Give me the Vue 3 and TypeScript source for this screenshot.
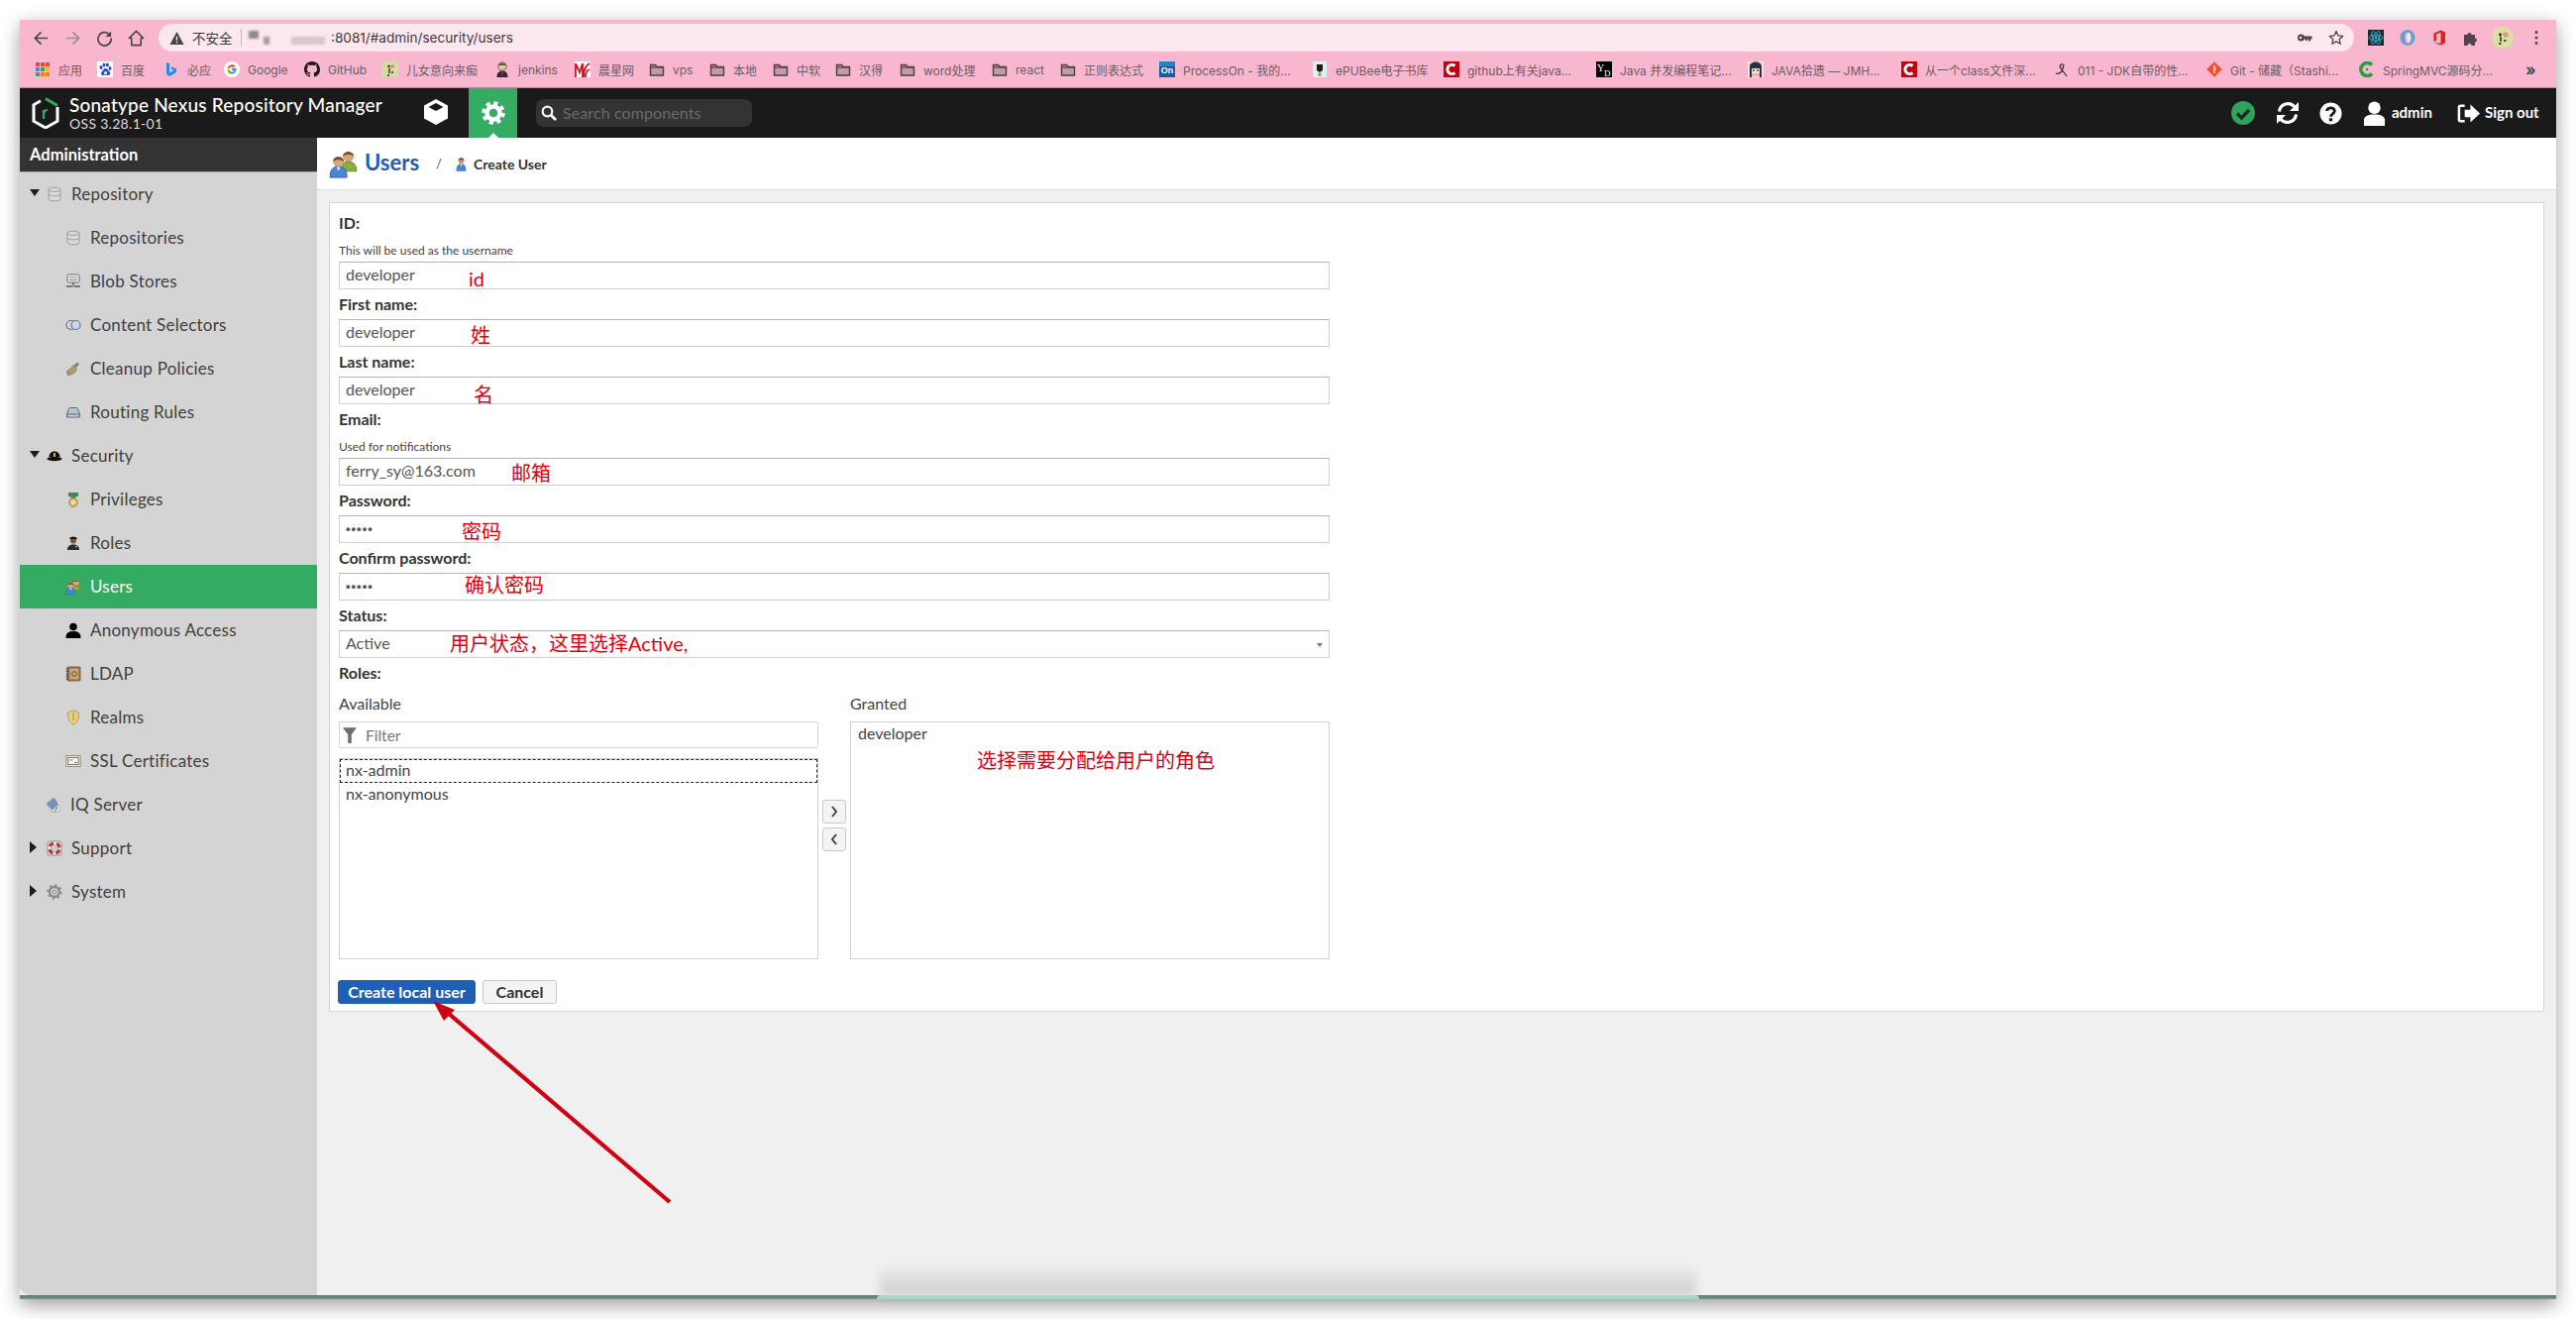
<script setup lang="ts">
const folder = '<path d="M1.500 3.500h5l1.500 2h6.500v8.500h-13z" fill="#c39aa8" stroke="#4c3f46" stroke-width="1.400"/><path d="M1.500 6h13" stroke="#4c3f46" stroke-width="1.200"/>'
const cred = '<rect width="16" height="16" fill="#c00010"/><path d="M11.500 4.500A4.600 4.600 0 1 0 11.500 11.500" fill="none" stroke="#fff" stroke-width="3"/>'
const icons: Record<string, string> = {
  apps: [0, 1, 2].flatMap((r) => [0, 1, 2].map((c) => `<rect x="${1 + c * 5}" y="${1 + r * 5}" width="4" height="4" fill="${['#e8453c', '#e8453c', '#e8453c', '#4285f4', '#34a853', '#fbbc05', '#34a853', '#ea8600', '#ea8600'][r * 3 + c]}"/>`)).join(''),
  baidu: '<rect width="16" height="16" fill="#fff"/><g fill="#2b4fd8"><ellipse cx="4" cy="6" rx="1.600" ry="2.100"/><ellipse cx="7" cy="3.400" rx="1.500" ry="2"/><ellipse cx="10.400" cy="3.600" rx="1.500" ry="2"/><ellipse cx="13" cy="7" rx="1.500" ry="2"/><path d="M8.500 7c2 0 2.500 2 4 3.200 1.500 1.500.4 4-1.800 3.800-1.400-.2-2.600-.4-4 0-2.400.4-3.400-2.200-1.800-3.800C6.200 9 6.500 7 8.500 7z"/></g><circle cx="8.500" cy="11.500" r="1.500" fill="#fff"/>',
  bing: '<path d="M3 1l3 1v9.500l4.500-2.500-2-1-1.200-3L13 7.500v3.500L6 15l-3-2z" fill="#1f8fe6"/>',
  google: '<circle cx="8" cy="8" r="8" fill="#fff"/><path d="M8 3.300a4.700 4.700 0 0 0-4.200 2.600L5.500 7.200A2.900 2.900 0 0 1 10 6.100l1.400-1.400A4.700 4.700 0 0 0 8 3.300z" fill="#ea4335"/><path d="M3.800 5.900a4.700 4.700 0 0 0 0 4.200l1.700-1.300a2.900 2.900 0 0 1 0-1.600z" fill="#fbbc05"/><path d="M3.800 10.100A4.700 4.700 0 0 0 11 11.600L9.400 10.300A2.900 2.900 0 0 1 5.500 8.800z" fill="#34a853"/><path d="M12.600 7.100H8v1.900h2.700a2.300 2.300 0 0 1-1.300 1.300L11 11.600a4.700 4.700 0 0 0 1.600-4.500z" fill="#4285f4"/>',
  github: '<path fill="#1a1a1a" d="M8 0C3.580 0 0 3.580 0 8c0 3.540 2.290 6.530 5.470 7.590.4.070.55-.17.55-.38 0-.19-.01-.82-.01-1.490-2.010.37-2.530-.49-2.690-.94-.09-.23-.48-.94-.82-1.130-.28-.15-.68-.52-.01-.53.63-.01 1.080.58 1.230.82.720 1.210 1.870.87 2.330.66.070-.52.28-.87.51-1.070-1.780-.2-3.640-.89-3.640-3.950 0-.87.31-1.590.82-2.150-.08-.2-.36-1.020.08-2.120 0 0 .67-.21 2.200.82.64-.18 1.320-.27 2-.27.68 0 1.360.09 2 .27 1.530-1.040 2.200-.82 2.200-.82.44 1.100.16 1.920.08 2.120.51.56.82 1.270.82 2.150 0 3.070-1.870 3.750-3.650 3.950.29.25.54.73.54 1.480 0 1.070-.01 1.930-.01 2.200 0 .21.15.46.55.38A8.013 8.013 0 0016 8c0-4.420-3.580-8-8-8z"/>',
  photo: '<rect width="16" height="16" fill="#d6dc9f"/><circle cx="10" cy="5" r="2" fill="#d89a70"/><circle cx="6.500" cy="5" r="1.200" fill="#222"/><path d="M7 7v5M5 14h2M9 11h2" stroke="#222" stroke-width="1.300"/>',
  jenkins: '<circle cx="8" cy="5" r="4.200" fill="#e8c4a0" stroke="#444" stroke-width=".7"/><path d="M4 4c.5-3 7-3.500 8 0z" fill="#555"/><path d="M2.500 16c0-5 2.500-6.500 5.500-6.500s5.500 1.500 5.500 6.500z" fill="#2a2a3a"/><path d="M7 9.500h2l-.5 5h-1z" fill="#c02030"/>',
  star: '<rect width="16" height="16" fill="#fff"/><path d="M1 16V2l4 9 3-9v14M9 16c0-8 2-12 6-14M15 8c-3 1-4 4-4 8" fill="none" stroke="#d8101a" stroke-width="1.800"/>',
  folder,
  on: '<rect width="16" height="16" fill="#1a5a9e"/><rect width="16" height="5" fill="#2a80c0"/><text x="8" y="12" font-size="9" font-weight="700" text-anchor="middle" fill="#fff" font-family="Liberation Sans">On</text>',
  epub: '<rect x="1" width="14" height="16" fill="#dff0f5"/><path d="M5 3h6v6l-3 2-3-2z" fill="#201a10"/><path d="M8 10l-2 4 2 1 2-1z" fill="#7ab030"/>',
  cred,
  yd: '<rect width="16" height="16" fill="#000"/><text x="1" y="10" font-size="10" font-family="Liberation Serif" fill="#fff">Y</text><text x="8" y="15" font-size="9" font-family="Liberation Serif" fill="#fff">D</text>',
  anime: '<rect width="16" height="16" fill="#ece4d8"/><path d="M2 16V5c0-6 12-6 12 0v11h-2V7H4v9z" fill="#2c2c44"/><circle cx="6" cy="9" r="1" fill="#345"/><circle cx="10" cy="9" r="1" fill="#345"/><rect x="4" y="12" width="8" height="3" fill="#f0b0a0"/>',
  sig: '<path d="M2 12c2 1 4 0 6-2l2-6c-2-3-5 0-3 3l6 8" fill="none" stroke="#2a2a2a" stroke-width="1.200"/>',
  git: '<rect x="2.500" y="2.500" width="11" height="11" transform="rotate(45 8 8)" fill="#f05030"/><path d="M8 4v8M8 8l2-1" stroke="#fff" stroke-width="1.200"/>',
  cgreen: '<path d="M13 3.500A6.500 6.500 0 1 0 13 12.500" fill="none" stroke="#2c9a45" stroke-width="3.600"/><circle cx="8" cy="8" r="1.300" fill="#2c9a45"/>',
  db: '<g fill="#dadada" stroke="#8e8e8e" stroke-width=".8"><path d="M2 3.500c0-3 12-3 12 0v9c0 3-12 3-12 0z" /><path d="M2 3.500c0 2.500 12 2.500 12 0M2 8c0 2.500 12 2.500 12 0" fill="none"/></g>',
  blob: '<rect x="2" y="1" width="12" height="8" rx="1.500" fill="#eee" stroke="#666"/><path d="M4 4h8M4 6.500h8" stroke="#888"/><path d="M8 9v3M1 13h14" stroke="#555" stroke-width="1.400"/><rect x="6.500" y="11.500" width="3" height="2.500" fill="#c8963c"/>',
  sel: '<circle cx="5.500" cy="8" r="4.500" fill="#d8d8d8" stroke="#777" stroke-width="1.200"/><circle cx="10.500" cy="8" r="4.500" fill="#c8d8ec" stroke="#5c7690" stroke-width="1.200"/>',
  broom: '<path d="M12 1.500l2 2-4 4-2-2z" fill="#8a7a58"/><path d="M8 4.500l3.500 3.500c-1 4-4 6.500-9.500 6.500l2-2-3 .5 2-3-1.500.5C4 9 6 7 8 4.500z" fill="#b09a70" stroke="#6e5e42" stroke-width=".5"/>',
  route: '<path d="M1.500 10l2-5.500c.2-.5.5-1 1.500-1h6c1 0 1.300.5 1.500 1l2 5.500v3h-13z" fill="#b7c4cc" stroke="#5d6a72"/><path d="M1.500 10h13" stroke="#5d6a72"/><path d="M4 11.700h8" stroke="#dfe6ea" stroke-dasharray="1 1"/>',
  cap: '<ellipse cx="8" cy="11" rx="7.600" ry="2.200" fill="#111"/><path d="M2.500 9c0-7.500 11-7.500 11 0z" fill="#111"/><rect x="7" y="5" width="2" height="4" fill="#d8b050"/>',
  medal: '<rect x="3" y="1" width="10" height="4" fill="#3f8a4e"/><rect x="5.500" y="5" width="5" height="2" fill="#777"/><circle cx="8" cy="11" r="4.200" fill="#e2c76c" stroke="#92783a"/><circle cx="8" cy="11" r="2" fill="#f2e2a6"/>',
  roles: '<path d="M2 15c0-4 2.500-5.500 6-5.500s6 1.500 6 5.500z" fill="#2c2c30"/><circle cx="8" cy="5.500" r="3.100" fill="#7d5838"/><path d="M4 4c.5-3.500 7.500-3.500 8 0z" fill="#141414"/><rect x="10" y="11" width="2" height="1.200" fill="#d8b050"/>',
  users: '<circle cx="10.800" cy="4" r="3" fill="#d9a878"/><path d="M7.800 3.800C7.800.4 13.800.4 13.800 3.800 12.500 2.500 9 2.500 7.800 3.800z" fill="#7a4a22"/><path d="M6.500 12c0-4 1.800-5.300 4.300-5.300S15.300 8 15.300 12z" fill="#88ad42" stroke="#5d7a28" stroke-width=".5"/><circle cx="5.300" cy="6.800" r="3" fill="#d9a878"/><path d="M2.300 6.600C2.300 3.200 8.300 3.200 8.300 6.600 7 5.300 3.500 5.300 2.300 6.600z" fill="#7a4a22"/><path d="M.6 15.500c0-5 2-6 4.700-6s4.700 1 4.700 6z" fill="#4a86d8" stroke="#2c5ea8" stroke-width=".5"/><path d="M4.300 9.600h2l-1 2.200z" fill="#fff"/>',
  user1: '<circle cx="8" cy="4.500" r="3" fill="#c99068"/><path d="M5 4c.2-3.500 5.800-3.500 6 0-1.500-1-4.500-1-6 0z" fill="#6a3e1c"/><path d="M3 15.500c0-5.500 2-7.500 5-7.500s5 2 5 7.500z" fill="#4a86d8" stroke="#2c5ea8" stroke-width=".5"/><path d="M6.800 8h2.400l-1.200 2.500z" fill="#fff"/>',
  anon: '<circle cx="8" cy="4.500" r="3.800" fill="#000"/><path d="M.5 15.500c0-5 3-6.500 7.500-6.500s7.500 1.500 7.500 6.500c0 .5-1 .5-1 .5H1.500s-1 0-1-.5z" fill="#000"/>',
  ldap: '<rect x="2" y="1" width="13" height="14" rx="1" fill="#a8845c" stroke="#5e4426" stroke-width=".8"/><rect x="5" y="3" width="8" height="10" fill="#caa87c"/><circle cx="9" cy="8" r="2.400" fill="none" stroke="#6e5030"/><path d="M.8 3h2.500M.8 5.500h2.500M.8 8h2.500M.8 10.500h2.500M.8 13h2.500" stroke="#333" stroke-width="1"/>',
  shield: '<path d="M8 .8l5.500 2.200c.3 5.500-1.300 9.700-5.500 12.200C3.800 12.700 2.200 8.500 2.500 3z" fill="#e7cf80" stroke="#a98e44" stroke-width=".8"/><path d="M8 3v8" stroke="#a98e44"/>',
  ssl: '<rect x=".8" y="2.500" width="14.400" height="11" fill="#efe7d6" stroke="#a08d6c"/><rect x="2.800" y="4.500" width="10.400" height="7" fill="#f8f6f0" stroke="#777"/><path d="M4.500 7h3M9 9.500h3" stroke="#5a78a8"/>',
  iq: '<path d="M1 6.500L6 2h4l1 3v10H6z" fill="#e7e7e7" stroke="#8a8a8a" stroke-width=".7"/><path d="M2 7l6-5 4 5-5 6z" fill="#6c94c6" stroke="#3e628e" stroke-width=".6"/><path d="M12 8l2 1v6H9z" fill="#eee" stroke="#999" stroke-width=".6"/><path d="M10 14l2-4" stroke="#79a53a" stroke-width="1.400"/>',
  buoy: '<rect x=".7" y=".7" width="14.600" height="14.600" rx="2" fill="#c8c8c8" stroke="#8a8a8a" stroke-width=".6"/><circle cx="8" cy="8" r="5" fill="none" stroke="#b8363a" stroke-width="3.200"/><circle cx="8" cy="8" r="5" fill="none" stroke="#f1eded" stroke-width="3.200" stroke-dasharray="3 4.850" stroke-dashoffset="1.500"/>',
  gear: '<circle cx="8" cy="8" r="5" fill="none" stroke="#8c8c8c" stroke-width="2.400"/><circle cx="8" cy="8" r="6.800" fill="none" stroke="#8c8c8c" stroke-width="2" stroke-dasharray="2 3.340"/><circle cx="8" cy="8" r="2" fill="none" stroke="#8c8c8c"/>',
}

const bookmarks = [
  { icon: 'apps', label: '应用', w: 63 },
  { icon: 'baidu', label: '百度', w: 67 },
  { icon: 'bing', label: '必应', w: 61 },
  { icon: 'google', label: 'Google', w: 81 },
  { icon: 'github', label: 'GitHub', w: 79 },
  { icon: 'photo', label: '儿女意向来痴', w: 113 },
  { icon: 'jenkins', label: 'jenkins', w: 81 },
  { icon: 'star', label: '晨星网', w: 75 },
  { icon: 'folder', label: 'vps', w: 61 },
  { icon: 'folder', label: '本地', w: 64 },
  { icon: 'folder', label: '中软', w: 63 },
  { icon: 'folder', label: '汉得', w: 65 },
  { icon: 'folder', label: 'word处理', w: 93 },
  { icon: 'folder', label: 'react', w: 69 },
  { icon: 'folder', label: '正则表达式', w: 100 },
  { icon: 'on', label: 'ProcessOn - 我的...', w: 154 },
  { icon: 'epub', label: 'ePUBee电子书库', w: 133 },
  { icon: 'cred', label: 'github上有关java...', w: 154 },
  { icon: 'yd', label: 'Java 并发编程笔记...', w: 153 },
  { icon: 'anime', label: 'JAVA拾遗 — JMH...', w: 155 },
  { icon: 'cred', label: '从一个class文件深...', w: 154 },
  { icon: 'sig', label: '011 - JDK自带的性...', w: 154 },
  { icon: 'git', label: 'Git - 储藏\uFF08Stashi...', w: 154 },
  { icon: 'cgreen', label: 'SpringMVC源码分...', w: 150 },
]

const tree = [
  { label: 'Repository', icon: 'db', level: 'l1', arrow: 'down' },
  { label: 'Repositories', icon: 'db', level: 'l2' },
  { label: 'Blob Stores', icon: 'blob', level: 'l2' },
  { label: 'Content Selectors', icon: 'sel', level: 'l2' },
  { label: 'Cleanup Policies', icon: 'broom', level: 'l2' },
  { label: 'Routing Rules', icon: 'route', level: 'l2' },
  { label: 'Security', icon: 'cap', level: 'l1', arrow: 'down' },
  { label: 'Privileges', icon: 'medal', level: 'l2' },
  { label: 'Roles', icon: 'roles', level: 'l2' },
  { label: 'Users', icon: 'users', level: 'l2', active: true },
  { label: 'Anonymous Access', icon: 'anon', level: 'l2' },
  { label: 'LDAP', icon: 'ldap', level: 'l2' },
  { label: 'Realms', icon: 'shield', level: 'l2' },
  { label: 'SSL Certificates', icon: 'ssl', level: 'l2' },
  { label: 'IQ Server', icon: 'iq', level: 'l0' },
  { label: 'Support', icon: 'buoy', level: 'l1', arrow: 'right' },
  { label: 'System', icon: 'gear', level: 'l1', arrow: 'right' },
]

const fields = [
  { label: 'ID:', help: 'This will be used as the username', value: 'developer', note: 'id', noteClass: 'n-id' },
  { label: 'First name:', value: 'developer', note: '姓', noteClass: 'n-first' },
  { label: 'Last name:', value: 'developer', note: '名', noteClass: 'n-last' },
  { label: 'Email:', help: 'Used for notifications', value: 'ferry_sy@163.com', note: '邮箱', noteClass: 'n-mail' },
  { label: 'Password:', value: '•••••', dots: true, note: '密码', noteClass: 'n-pass' },
  { label: 'Confirm password:', value: '•••••', dots: true, note: '确认密码', noteClass: 'n-confirm' },
  { label: 'Status:', value: 'Active', select: true, note: '用户状态\uFF0C这里选择Active,', noteClass: 'n-status' },
]
</script>

<template>
  <div class="desktop">
    <div class="window">
      <div class="toolbar">
        <div class="nav-icons">
          <svg class="nav" viewBox="0 0 20 20"><path d="M17 10H4M10 3.500L3.500 10l6.500 6.500" fill="none" stroke="#4e4549" stroke-width="1.800"/></svg>
          <svg class="nav" viewBox="0 0 20 20"><path d="M3 10h13M10 3.500l6.500 6.500-6.500 6.500" fill="none" stroke="#a58a95" stroke-width="1.800"/></svg>
          <svg class="nav" viewBox="0 0 20 20"><path d="M15.500 6.500A7 7 0 1 0 17 10" fill="none" stroke="#4e4549" stroke-width="1.800"/><path d="M17 2.500v6h-6z" fill="#4e4549"/></svg>
          <svg class="nav" viewBox="0 0 20 20"><path d="M10 2.500L2.500 10H5v7.500h10V10h2.500z" fill="none" stroke="#4e4549" stroke-width="1.700" stroke-linejoin="round"/></svg>
        </div>
        <div class="address">
          <svg class="warn" viewBox="0 0 16 16"><path d="M8 1l7.500 14H.5z" fill="#444"/><path d="M8 6v4.500M8 11.800v1.400" stroke="#fde7ef" stroke-width="1.500"/></svg>
          <span class="insecure">不安全</span>
          <span class="divider"></span>
          <span class="blurred"><i class="b1"></i><i class="b2"></i><i class="b3"></i></span>
          <span class="url">:8081/#admin/security/users</span>
          <span class="spacer"></span>
          <svg class="addr-ic key" viewBox="0 0 16 16"><circle cx="4.500" cy="8" r="3.500" fill="#4e4549"/><circle cx="4" cy="8" r="1.200" fill="#fde7ef"/><path d="M7 6.500h8.500v3h-1.500v2h-2v-2h-1v1.500H9v-1.500H7z" fill="#4e4549"/></svg>
          <svg class="addr-ic" viewBox="0 0 16 16"><path d="M8 1.500l2 4.400 4.800.5-3.600 3.200 1 4.700L8 11.900l-4.200 2.400 1-4.700L1.200 6.400 6 5.900z" fill="none" stroke="#4e4549" stroke-width="1.300" stroke-linejoin="round"/></svg>
        </div>
        <div class="ext-icons">
          <svg class="ext" viewBox="0 0 16 16"><rect width="16" height="16" fill="#1d2a30"/><g fill="none" stroke="#35c6ea" stroke-width=".8"><ellipse cx="8" cy="8" rx="7" ry="2.800"/><ellipse cx="8" cy="8" rx="7" ry="2.800" transform="rotate(60 8 8)"/><ellipse cx="8" cy="8" rx="7" ry="2.800" transform="rotate(120 8 8)"/></g><circle cx="8" cy="8" r="1.400" fill="#35c6ea"/></svg>
          <svg class="ext" viewBox="0 0 16 16"><ellipse cx="8" cy="8" rx="7.500" ry="8" fill="#6f9ccc"/><ellipse cx="8.500" cy="8" rx="3" ry="5.500" fill="#f3c8d4"/><ellipse cx="9.500" cy="8" rx="1.500" ry="4" fill="#e8eef6"/></svg>
          <svg class="ext" viewBox="0 0 16 16"><path d="M9.500 .5l4.500 2v11l-4.500 2-7-2.500 7 .8V2.800L5 4.500v6.500l-2.500.9V3.600z" fill="#d7261c"/></svg>
          <svg class="ext" viewBox="0 0 16 16"><path d="M1 5h3.500a2 2 0 1 1 4 0H12v3.500a2 2 0 1 1 0 4V16H8.500a2 2 0 1 0-4 0H1z" fill="#4e4549"/></svg>
          <svg class="avatar" viewBox="0 0 22 22"><circle cx="11" cy="11" r="11" fill="#dcdfa4"/><circle cx="14" cy="8" r="2.600" fill="#e09a74"/><circle cx="8.500" cy="8" r="1.400" fill="#222"/><path d="M9 10v5M7 17h2.500M12 14h2.500" stroke="#222" stroke-width="1.400"/></svg>
          <svg class="kebab" viewBox="0 0 4 16"><circle cx="2" cy="2.500" r="1.500" fill="#4e4549"/><circle cx="2" cy="8" r="1.500" fill="#4e4549"/><circle cx="2" cy="13.500" r="1.500" fill="#4e4549"/></svg>
        </div>
      </div>

      <div class="bookmarks">
        <div v-for="b in bookmarks" :key="b.label" class="bookmark" :style="{ width: b.w + 'px' }">
          <svg class="bm-icon" viewBox="0 0 16 16" v-html="icons[b.icon]"></svg>
          <span>{{ b.label }}</span>
        </div>
        <span class="more">»</span>
      </div>

      <header class="nx-header">
        <svg class="logo" viewBox="0 0 28 32">
          <path d="M9 3.800L2 7.800v16.400L14 31l12-6.800V10" fill="none" stroke="#fff" stroke-width="3"/>
          <path d="M14 1.500l12 7" fill="none" stroke="#35ab63" stroke-width="3"/>
          <path d="M12 22v-9M12 16c.5-2.500 2-3 4-3" fill="none" stroke="#35ab63" stroke-width="2.200"/>
        </svg>
        <div class="brand">
          <div class="brand-title">Sonatype Nexus Repository Manager</div>
          <div class="brand-sub">OSS 3.28.1-01</div>
        </div>
        <svg class="cube" viewBox="0 0 24 26"><path d="M12 0l12 6.500v13L12 26 0 19.500v-13z" fill="#fff"/><path d="M12 4l7.500 4L12 12 4.500 8z" fill="#1a1a1a"/></svg>
        <div class="gear-tab">
          <svg class="gear" viewBox="0 0 24 24"><circle cx="12" cy="12" r="6.500" fill="none" stroke="#fff" stroke-width="4.500"/><circle cx="12" cy="12" r="10" fill="none" stroke="#fff" stroke-width="3.600" stroke-dasharray="4.200 3.650"/></svg>
        </div>
        <div class="search">
          <svg class="search-ic" viewBox="0 0 16 16"><circle cx="6.500" cy="6.500" r="4.800" fill="none" stroke="#fff" stroke-width="2.200"/><path d="M10 10l5 5" stroke="#fff" stroke-width="2.800"/></svg>
          <span>Search components</span>
        </div>
        <div class="spacer"></div>
        <svg class="hd-ic ok" viewBox="0 0 24 24"><circle cx="12" cy="12" r="12" fill="#2da45c"/><path d="M6 12.500l4.500 4.500L18 9" fill="none" stroke="#1a2a20" stroke-width="3.400"/></svg>
        <svg class="hd-ic refresh" viewBox="0 0 24 24"><path d="M3.500 10.500A8.800 8.800 0 0 1 19 5.800" fill="none" stroke="#fff" stroke-width="3.200"/><path d="M23 1v9h-9z" fill="#fff"/><path d="M20.500 13.500A8.800 8.800 0 0 1 5 18.200" fill="none" stroke="#fff" stroke-width="3.200"/><path d="M1 23v-9h9z" fill="#fff"/></svg>
        <svg class="hd-ic hd-help" viewBox="0 0 24 24"><circle cx="12" cy="12" r="11.500" fill="#fff"/><path d="M8 9.500C8 5 16 5 16 9.500c0 3-4 2.800-4 6" fill="none" stroke="#1a1a1a" stroke-width="3"/><rect x="10.300" y="17" width="3.400" height="3.200" fill="#1a1a1a"/></svg>
        <svg class="hd-ic person" viewBox="0 0 24 26"><circle cx="12" cy="7" r="6.500" fill="#fff"/><path d="M1 26v-6c0-4 4-6 11-6s11 2 11 6v6z" fill="#fff"/></svg>
        <span class="hd-text admin">admin</span>
        <svg class="hd-ic signout" viewBox="0 0 24 24"><path d="M8 4H3.500A1.500 1.500 0 0 0 2 5.500v13A1.500 1.500 0 0 0 3.500 20H8" fill="none" stroke="#fff" stroke-width="2.600"/><path d="M8 8h6V2.500L24 12l-10 9.500V16H8z" fill="#fff"/></svg>
        <span class="hd-text signout-text">Sign out</span>
      </header>

      <div class="body">
        <aside class="sidebar">
          <div class="side-title">Administration</div>
          <div
            v-for="row in tree"
            :key="row.label + row.level"
            class="tree-row"
            :class="[row.level, { active: row.active }]"
          >
            <span v-if="row.arrow" class="arrow" :class="row.arrow"></span>
            <svg class="tree-ic" viewBox="0 0 16 16" v-html="icons[row.icon]"></svg>
            <span class="tree-text">{{ row.label }}</span>
          </div>
        </aside>

        <main class="main">
          <div class="page-head">
            <svg class="head-users" viewBox="0 0 16 16" v-html="icons.users"></svg>
            <span class="crumb-main">Users</span>
            <span class="crumb-sep">/</span>
            <svg class="head-user" viewBox="0 0 16 16" v-html="icons.user1"></svg>
            <span class="crumb-sub">Create User</span>
          </div>

          <div class="content">
            <section class="panel">
              <div v-for="f in fields" :key="f.label" class="field">
                <div class="label">{{ f.label }}</div>
                <div v-if="f.help" class="help-text">{{ f.help }}</div>
                <div class="input" :class="{ dots: f.dots }">
                  {{ f.value }}
                  <span class="note" :class="f.noteClass">{{ f.note }}</span>
                  <span v-if="f.select" class="caret"></span>
                </div>
              </div>
              <div class="field">
                <div class="label">Roles:</div>
              </div>
              <div class="roles">
                <div class="role-col">
                  <div class="role-title">Available</div>
                  <div class="filter">
                    <svg class="funnel" viewBox="0 0 16 20"><path d="M0 1h16L10 9v10H6V9z" fill="#6e6e6e"/></svg>
                    <span>Filter</span>
                  </div>
                  <div class="list avail">
                    <div class="opt focused">nx-admin</div>
                    <div class="opt">nx-anonymous</div>
                  </div>
                </div>
                <div class="role-btns">
                  <div class="mini"><svg viewBox="0 0 10 14"><path d="M3 2l4 5-4 5" fill="none" stroke="#444" stroke-width="2"/></svg></div>
                  <div class="mini"><svg viewBox="0 0 10 14"><path d="M7 2L3 7l4 5" fill="none" stroke="#444" stroke-width="2"/></svg></div>
                </div>
                <div class="role-col">
                  <div class="role-title">Granted</div>
                  <div class="list granted">
                    <div class="opt">developer</div>
                    <span class="note n-roles">选择需要分配给用户的角色</span>
                  </div>
                </div>
              </div>
              <div class="actions">
                <button class="btn primary" type="button">Create local user</button>
                <button class="btn" type="button">Cancel</button>
              </div>
            </section>
          </div>
        </main>
      </div>

      <div class="dock-band"><div class="dock-mid"></div></div>

      <div class="dock-shadow"></div>
      <svg class="annot-arrow" viewBox="0 0 2560 1291" aria-hidden="true">
        <path d="M656 1193L426 997" stroke="#cf0012" stroke-width="4.200" fill="none"/>
        <path d="M417 990l22 9-11 11z" fill="#cf0012"/>
      </svg>
    </div>
  </div>
</template>

<style>
html, body { margin: 0; background: #fff; }
</style>

<style scoped>
.desktop {
  width: 2600px;
  height: 1331px;
  box-sizing: border-box;
  padding: 20px 20px 20px;
  background: #fff;
  overflow: hidden;
  font-family: Lato, "Noto Sans CJK SC", sans-serif;
}
.window {
  position: relative;
  height: 1291px;
  display: flex;
  flex-direction: column;
  background: #f0f0f0;
  box-shadow: 0 6px 18px rgba(0, 0, 0, 0.38);
}
.spacer { flex: 1; }

/* browser chrome */
.toolbar {
  height: 32px;
  box-sizing: border-box;
  padding-top: 4px;
  display: flex;
  background: #f9b6cf;
  font-family: Inter, "Noto Sans CJK SC", sans-serif;
}
.nav-icons { width: 140px; display: flex; align-items: center; padding-left: 12px; gap: 13px; box-sizing: border-box; }
.nav { width: 19px; height: 19px; flex: none; }
.address {
  width: 2216px;
  height: 28px;
  display: flex;
  align-items: center;
  background: #fde7ef;
  border-radius: 14px;
  box-sizing: border-box;
  padding: 0 10px 0 11px;
  font-size: 13.600px;
  color: #3d3a3c;
}
.warn { width: 15px; height: 15px; margin-right: 8px; }
.insecure { width: 42px; font-size: 13.500px; white-space: nowrap; }
.divider { width: 1px; height: 18px; background: #c9b8bf; margin: 0 7px; }
.blurred { width: 83px; height: 16px; display: flex; align-items: center; filter: blur(1.200px); }
.blurred i { display: block; background: #8e8a8c; height: 8px; }
.b1 { width: 10px; margin-right: 5px; margin-top: -6px; }
.b2 { width: 6px; margin-right: 22px; margin-top: 6px; opacity: .8; }
.b3 { width: 34px; opacity: .35; margin-top: 5px; }
.url { white-space: nowrap; width: 186px; }
.addr-ic { width: 16px; height: 16px; margin-left: 16px; }
.addr-ic.key { margin-left: 0; }
.ext-icons { flex: 1; display: flex; align-items: center; height: 28px; padding-left: 14px; }
.ext { width: 16px; height: 16px; margin-right: 16px; flex: none; }
.avatar { width: 22px; height: 22px; margin-left: -3px; }
.kebab { width: 4px; height: 16px; margin-left: 21px; }

.bookmarks {
  height: 36px;
  box-sizing: content-box;
  border-bottom: 1px solid #ad8796;
  display: flex;
  align-items: center;
  padding-left: 15px;
  background: #f9b6cf;
  font-family: Inter, "Noto Sans CJK SC", sans-serif;
  font-size: 12px;
  color: #6d5c63;
}
.bookmark { display: flex; align-items: center; flex: none; white-space: nowrap; overflow: hidden; }
.bm-icon { width: 16px; height: 16px; flex: none; margin-right: 8px; }
.more { margin-left: 18px; font-size: 16px; font-weight: 700; color: #4e4549; }

/* nexus header */
.nx-header {
  height: 50px;
  display: flex;
  align-items: center;
  background: #1a1a1a;
  color: #fff;
  flex: none;
}
.logo { width: 28px; height: 32px; margin-left: 12px; flex: none; }
.brand { margin-left: 10px; width: 358px; }
.brand-title { font-size: 19px; letter-spacing: .2px; line-height: 22px; font-weight: 500; white-space: nowrap; }
.brand-sub { font-size: 14px; line-height: 16px; color: #ddd; letter-spacing: .3px; }
.cube { width: 24px; height: 26px; flex: none; margin-top: -2px; }
.gear-tab {
  position: relative;
  width: 49px;
  height: 50px;
  margin-left: 21px;
  background: #35ab63;
  display: flex;
  align-items: center;
  justify-content: center;
}
.gear-tab::after {
  content: "";
  position: absolute;
  left: 50%;
  bottom: 0;
  margin-left: -5px;
  border: 5px solid transparent;
  border-top: 0;
  border-bottom-color: #fff;
}
.gear { width: 24px; height: 24px; }
.search {
  width: 218px;
  height: 28px;
  margin-left: 19px;
  background: #333;
  border-radius: 8px;
  display: flex;
  align-items: center;
  box-sizing: border-box;
  padding-left: 5px;
  color: #6a6a6a;
  font-size: 16px;
  letter-spacing: .1px;
}
.search span { margin-top: -2px; }
.search-ic { width: 16px; height: 16px; margin-right: 6px; }
.hd-ic { flex: none; }
.ok { width: 24px; height: 24px; }
.refresh { width: 24px; height: 24px; margin-left: 21px; }
.hd-help { width: 23px; height: 23px; margin-left: 20px; }
.person { width: 23px; height: 25px; margin-left: 21px; }
.hd-text { font-size: 15px; font-weight: 700; white-space: nowrap; margin-top: -2px; }
.admin { margin-left: 6px; width: 40px; }
.signout { width: 23px; height: 23px; margin-left: 26px; }
.signout-text { margin-left: 5px; margin-right: 17px; width: 55px; }

/* body */
.body { flex: 1; display: flex; min-height: 0; }
.sidebar { width: 300px; flex: none; background: #d4d4d4; border-bottom-left-radius: 10px; }
.side-title {
  height: 34px;
  line-height: 34px;
  padding-left: 10px;
  background: #333;
  border-bottom: 1px solid #a8a8a8;
  color: #fff;
  font-size: 16.500px;
  font-weight: 700;
}
.tree-row {
  height: 44px;
  display: flex;
  align-items: center;
  font-size: 17px;
  letter-spacing: .25px;
  color: #3f3f3f;
  white-space: nowrap;
}
.tree-text { margin-top: -2px; }
.tree-row.l1 { padding-left: 10px; }
.tree-row.l2 { padding-left: 46px; }
.tree-row.l0 { padding-left: 26px; }
.tree-row.active { background: #34aa62; color: #fff; }
.arrow { width: 17px; height: 10px; flex: none; position: relative; }
.arrow::before { content: ""; position: absolute; left: 0; top: 0; border-style: solid; border-color: transparent; }
.arrow.down::before { top: 0; border-width: 7px 5px 0; border-top-color: #1c1c1c; }
.arrow.right::before { top: -2px; left: 0; border-width: 6px 0 6px 7px; border-left-color: #1c1c1c; }
.tree-ic { width: 16px; height: 16px; flex: none; margin-right: 9px; }

.main { flex: 1; min-width: 0; display: flex; flex-direction: column; background: #f0f0f0; border-bottom-right-radius: 10px; }
.page-head {
  height: 53px;
  box-sizing: border-box;
  flex: none;
  display: flex;
  align-items: center;
  background: #fff;
  border-bottom: 1px solid #ddd;
  padding-left: 12px;
  color: #333;
}
.head-users { width: 29px; height: 29px; margin-right: 7px; flex: none; }
.crumb-main { font-size: 22px; font-weight: 700; color: #1f5eb2; margin-top: -3px; width: 57px; }
.crumb-sep { margin-left: 15px; font-size: 13px; color: #555; width: 18px; }
.head-user { width: 15px; height: 15px; flex: none; }
.crumb-sub { font-size: 14px; font-weight: 700; margin-left: 5px; }

.content { flex: 1; padding: 12px; }
.panel {
  position: relative;
  background: #fff;
  border: 1px solid #d4d4d4;
  box-sizing: border-box;
  padding: 5px 10px 7px 9px;
}
.field { width: 1000px; }
.label { height: 20px; line-height: 18px; margin: 6px 0 4px; font-size: 16px; font-weight: 700; color: #333; }
.help-text { height: 16px; line-height: 16px; margin: 9px 0 3px; font-size: 12px; color: #444; white-space: nowrap; }
.input {
  position: relative;
  height: 28px;
  line-height: 23px;
  box-sizing: border-box;
  padding-left: 6px;
  border: 1px solid #cfcfcf;
  border-top-color: #b4b4b4;
  color: #555;
  font-size: 16px;
}
.input.dots { font-size: 13px; letter-spacing: 1px; line-height: 25px; font-family: "Liberation Sans", sans-serif; font-weight: 700; }
.note {
  position: absolute;
  color: #e0000c;
  font-family: Lato, "Noto Sans CJK SC", sans-serif;
  font-size: 20px;
  font-weight: 400;
  letter-spacing: 0;
  line-height: 26px;
  white-space: nowrap;
}
.n-id { left: 130px; top: 3px; }
.n-first { left: 132px; top: 2px; }
.n-last { left: 135px; top: 4px; }
.n-mail { left: 173px; top: 1px; }
.n-pass { left: 123px; top: 2px; }
.n-confirm { left: 126px; top: -2px; }
.n-status { left: 111px; top: -1px; }
.n-roles { left: 127px; top: 25px; }
.caret {
  position: absolute;
  right: 6px;
  top: 12px;
  border-style: solid;
  border-color: #777 transparent transparent;
  border-width: 4px 3.500px 0;
}

.roles { width: 1000px; display: flex; }
.role-col { width: 484px; flex: none; }
.role-title { height: 20px; line-height: 18px; margin-top: 7px; margin-bottom: 7px; font-size: 16px; color: #444; }
.filter {
  height: 27px;
  box-sizing: border-box;
  border: 1px solid #d4d4d4;
  border-radius: 2px;
  display: flex;
  align-items: center;
  padding-left: 3px;
  color: #777;
  font-size: 15.500px;
}
.funnel { width: 14px; height: 18px; margin-right: 9px; }
.list { position: relative; border: 1px solid #d0d0d0; box-sizing: border-box; color: #444; font-size: 16px; }
.avail { height: 203px; margin-top: 10px; }
.granted { height: 240px; padding-top: 0; }
.granted .opt { padding-left: 7px; }
.opt { height: 24px; line-height: 22px; padding-left: 6px; box-sizing: border-box; }
.focused { border: 1px dashed #222; line-height: 20px; padding-left: 5px; }
.role-btns { width: 32px; flex: none; display: flex; flex-direction: column; align-items: center; gap: 4px; padding-top: 113px; box-sizing: border-box; }
.mini { width: 24px; height: 24px; box-sizing: border-box; background: #f4f4f4; border: 1px solid #c8c8c8; border-radius: 3px; display: flex; align-items: center; justify-content: center; }
.mini svg { width: 10px; height: 14px; }
.actions { display: flex; gap: 7px; margin-top: 21px; margin-left: -1px; }
.btn {
  height: 24px;
  padding: 0 0 2px;
  width: 75px;
  box-sizing: border-box;
  border: 1px solid #c8c8c8;
  border-radius: 3px;
  background: #f4f4f4;
  color: #333;
  font-family: Lato, sans-serif;
  font-size: 16px;
  font-weight: 700;
}
.btn.primary { width: 139px; background: #1f5fb5; border-color: #1f5fb5; color: #fff; }

.dock-band { position: relative; z-index: 1; height: 4px; flex: none; background: linear-gradient(#5c7672, #7b9692); display: flex; justify-content: center; }
.dock-mid { width: 830px; background: #a5d5cb; border-radius: 4px 4px 0 0; }
.dock-shadow {
  position: absolute;
  left: 868px;
  bottom: 4px;
  width: 824px;
  height: 32px;
  background: linear-gradient(rgba(0, 0, 0, 0), rgba(0, 0, 0, 0.15));
  filter: blur(5px);
  pointer-events: none;
}
.annot-arrow { position: absolute; left: 0; top: 0; width: 2560px; height: 1291px; pointer-events: none; }
</style>
